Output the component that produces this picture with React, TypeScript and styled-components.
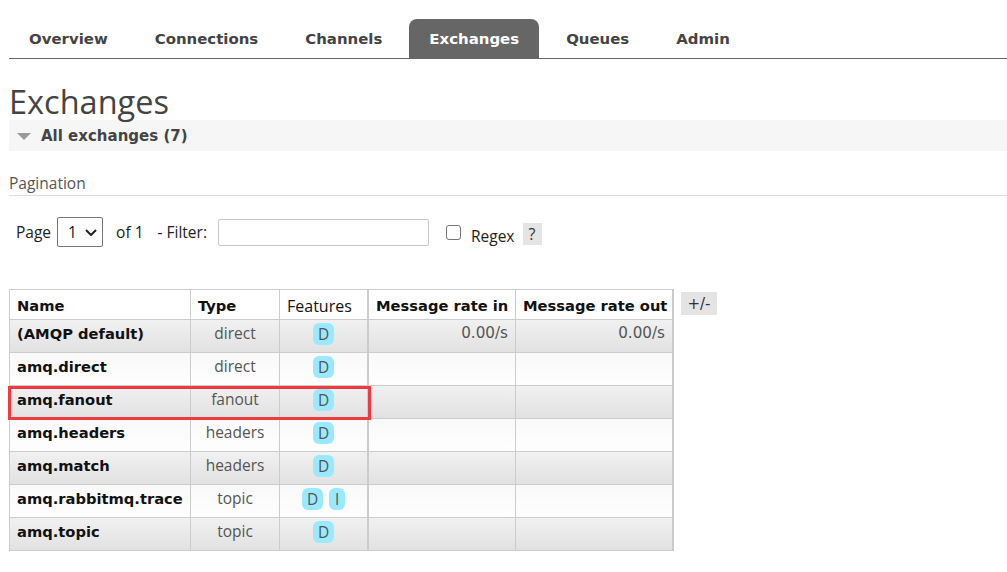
import React from "react";
import styled, { createGlobalStyle } from "styled-components";

const Global = createGlobalStyle`
  * { box-sizing: border-box; }
  html, body { margin: 0; padding: 0; background: #fff; }
  body { font-family: "Open Sans", "Liberation Sans", sans-serif; color: #333; }
`;

const Page = styled.div`
  padding-left: 9px;
  overflow: hidden;
  width: 1007px;
`;

const Nav = styled.ul`
  display: flex;
  gap: 7px;
  margin: 19px 0 0;
  padding: 0;
  list-style: none;
  border-bottom: 1px solid #666;
`;

const Tab = styled.li<{ $active?: boolean }>`
  height: 39px;
  line-height: 40px;
  padding: 0 20px;
  font-family: "DejaVu Sans", Verdana, sans-serif;
  font-weight: bold;
  font-size: 14.95px;
  color: ${(p) => (p.$active ? "#fff" : "#444")};
  background: ${(p) => (p.$active ? "#666" : "transparent")};
  border-radius: 8px 8px 0 0;
`;

const Title = styled.h1`
  margin: 26px 0 1px;
  font-family: "Open Sans", sans-serif;
  font-weight: 400;
  font-size: 32.5px;
  line-height: 34px;
  color: #444;
`;

const SectionBar = styled.div`
  display: flex;
  align-items: center;
  height: 31px;
  padding-left: 8px;
  background: #f6f6f6;
  font-family: "DejaVu Sans", Verdana, sans-serif;
  font-weight: bold;
  font-size: 15px;
  color: #444;
`;

const Arrow = styled.svg`
  width: 14px;
  height: 7px;
  margin-right: 10px;
  margin-top: 2px;
`;

const SubHeading = styled.h3`
  margin: 21px 0 0;
  padding-bottom: 1px;
  font-family: "Open Sans", sans-serif;
  font-weight: 400;
  font-size: 15.5px;
  line-height: 22px;
  color: #555;
  border-bottom: 1px solid #ddd;
`;

const PagerRow = styled.div`
  display: flex;
  align-items: center;
  height: 30px;
  margin-top: 21px;
  padding-left: 7px;
  font-size: 15.5px;
  color: #222;
`;

const Label = styled.span<{ $mr?: number; $shift?: number }>`
  margin-right: ${(p) => p.$mr ?? 0}px;
  position: relative;
  top: ${(p) => p.$shift ?? 0}px;
  white-space: nowrap;
`;

const SelectWrap = styled.div`
  position: relative;
  width: 46px;
  height: 30px;
  margin-right: 13px;
`;

const Select = styled.select`
  appearance: none;
  width: 100%;
  height: 100%;
  padding: 0 0 0 10px;
  border: 1px solid #767676;
  border-radius: 2px;
  background: #fff;
  font-family: "Open Sans", sans-serif;
  font-size: 15.5px;
  color: #111;
`;

const Chevron = styled.svg`
  position: absolute;
  right: 6px;
  top: 12px;
  width: 12px;
  height: 7px;
  pointer-events: none;
`;

const FilterInput = styled.input`
  width: 211px;
  height: 27px;
  margin-right: 17px;
  border: 1px solid #c8c8c8;
  border-radius: 2px;
  padding: 0 4px;
`;

const Check = styled.input`
  appearance: none;
  width: 15px;
  height: 15px;
  margin: 0 10px 0 0;
  border: 1px solid #767676;
  border-radius: 3px;
  background: #fff;
`;

const Help = styled.span`
  display: inline-flex;
  align-items: center;
  justify-content: center;
  width: 19px;
  height: 22px;
  margin-top: 4px;
  background: #e4e4e4;
  color: #333;
  font-size: 16px;
`;

const TableArea = styled.div`
  display: flex;
  align-items: flex-start;
  margin-top: 42px;
`;

const TableWrap = styled.div`
  position: relative;
`;

const Table = styled.table`
  border-collapse: separate;
  border-spacing: 0;
  table-layout: fixed;
  width: 665px;
  border-top: 1px solid #ccc;
  border-left: 1px solid #ccc;
`;

const Th = styled.th<{ $w: number; $light?: boolean; $sep?: boolean }>`
  width: ${(p) => p.$w}px;
  height: 30px;
  padding: 3px 7px 0;
  vertical-align: top;
  text-align: left;
  white-space: nowrap;
  line-height: 26px;
  background: #fff;
  border-right: ${(p) => (p.$sep ? 2 : 1)}px solid #ccc;
  border-bottom: 1px solid #ccc;
  font-family: ${(p) => (p.$light ? `"Open Sans", sans-serif` : `"DejaVu Sans", Verdana, sans-serif`)};
  font-weight: ${(p) => (p.$light ? 400 : 700)};
  font-size: ${(p) => (p.$light ? 16 : 14.7)}px;
  color: #111;
`;

const Tr = styled.tr<{ $odd: boolean }>`
  background: ${(p) =>
    p.$odd
      ? "linear-gradient(#f1f1f1, #e1e1e1)"
      : "linear-gradient(#f9f9f9, #fefefe)"};
`;

const Td = styled.td<{ $kind: "name" | "type" | "feat" | "rate"; $sep?: boolean }>`
  height: 33px;
  vertical-align: top;
  border-right: ${(p) => (p.$sep ? 2 : 1)}px solid #ccc;
  border-bottom: 1px solid #ccc;
  white-space: nowrap;
  padding: ${(p) =>
    p.$kind === "name" ? "5px 7px 0" : p.$kind === "feat" ? "3px 4px 0" : "4px 7px 0"};
  line-height: 18px;
  text-align: ${(p) =>
    p.$kind === "name" ? "left" : p.$kind === "rate" ? "right" : "center"};
  font-family: ${(p) =>
    p.$kind === "name" || p.$kind === "rate"
      ? `"DejaVu Sans", Verdana, sans-serif`
      : `"Open Sans", sans-serif`};
  font-weight: ${(p) => (p.$kind === "name" ? 700 : 400)};
  font-size: ${(p) => (p.$kind === "name" ? 14.7 : p.$kind === "rate" ? 15.2 : 15.5)}px;
  color: ${(p) => (p.$kind === "name" ? "#111" : "#555")};
`;

const Badges = styled.div`
  display: flex;
  justify-content: center;
  gap: 6px;
`;

const Badge = styled.span`
  display: inline-flex;
  align-items: center;
  justify-content: center;
  min-width: 16px;
  height: 22px;
  padding: 0 5px;
  border-radius: 6px;
  background: #9ae9ff;
  color: #555;
  font-family: "Open Sans", sans-serif;
  font-size: 15.5px;
  line-height: 22px;
`;

const Highlight = styled.div`
  position: absolute;
  left: -1px;
  top: 97px;
  width: 363px;
  height: 34px;
  border: 3px solid #ef3a3e;
  pointer-events: none;
`;

const ToggleCols = styled.span`
  display: inline-flex;
  align-items: center;
  justify-content: center;
  width: 36px;
  height: 23px;
  margin: 3px 0 0 7px;
  background: #e4e4e4;
  color: #333;
  font-family: "DejaVu Sans", Verdana, sans-serif;
  font-size: 15px;
`;

type Row = { name: string; type: string; features: string[]; rateIn?: string; rateOut?: string };

const rows: Row[] = [
  { name: "(AMQP default)", type: "direct", features: ["D"], rateIn: "0.00/s", rateOut: "0.00/s" },
  { name: "amq.direct", type: "direct", features: ["D"] },
  { name: "amq.fanout", type: "fanout", features: ["D"] },
  { name: "amq.headers", type: "headers", features: ["D"] },
  { name: "amq.match", type: "headers", features: ["D"] },
  { name: "amq.rabbitmq.trace", type: "topic", features: ["D", "I"] },
  { name: "amq.topic", type: "topic", features: ["D"] },
];

const tabs = ["Overview", "Connections", "Channels", "Exchanges", "Queues", "Admin"];

export default function App() {
  return (
    <>
      <Global />
      <Page>
        <Nav>
          {tabs.map((t) => (
            <Tab key={t} $active={t === "Exchanges"}>
              {t}
            </Tab>
          ))}
        </Nav>
        <Title>Exchanges</Title>
        <SectionBar>
          <Arrow viewBox="0 0 14 7">
            <polygon points="0,0 14,0 7,7" fill="#999" />
          </Arrow>
          All exchanges (7)
        </SectionBar>
        <SubHeading>Pagination</SubHeading>
        <PagerRow>
          <Label $mr={6}>Page</Label>
          <SelectWrap>
            <Select defaultValue="1">
              <option value="1">1</option>
            </Select>
            <Chevron viewBox="0 0 12 7">
              <polyline points="1,1 6,6 11,1" fill="none" stroke="#222" strokeWidth="2" />
            </Chevron>
          </SelectWrap>
          <Label $mr={14}>of 1</Label>
          <Label $mr={11}>- Filter:</Label>
          <FilterInput type="text" />
          <Check type="checkbox" />
          <Label $mr={8} $shift={4}>Regex</Label>
          <Help>?</Help>
        </PagerRow>
        <TableArea>
          <TableWrap>
            <Table>
              <thead>
                <tr>
                  <Th $w={181}>Name</Th>
                  <Th $w={89}>Type</Th>
                  <Th $w={89} $light $sep>
                    Features
                  </Th>
                  <Th $w={147}>Message rate in</Th>
                  <Th $w={158} $sep>
                    Message rate out
                  </Th>
                </tr>
              </thead>
              <tbody>
                {rows.map((r, i) => (
                  <Tr key={r.name} $odd={i % 2 === 0}>
                    <Td $kind="name">{r.name}</Td>
                    <Td $kind="type">{r.type}</Td>
                    <Td $kind="feat" $sep>
                      <Badges>
                        {r.features.map((f) => (
                          <Badge key={f}>{f}</Badge>
                        ))}
                      </Badges>
                    </Td>
                    <Td $kind="rate">{r.rateIn ?? ""}</Td>
                    <Td $kind="rate" $sep>
                      {r.rateOut ?? ""}
                    </Td>
                  </Tr>
                ))}
              </tbody>
            </Table>
            <Highlight />
          </TableWrap>
          <ToggleCols>+/-</ToggleCols>
        </TableArea>
      </Page>
    </>
  );
}
